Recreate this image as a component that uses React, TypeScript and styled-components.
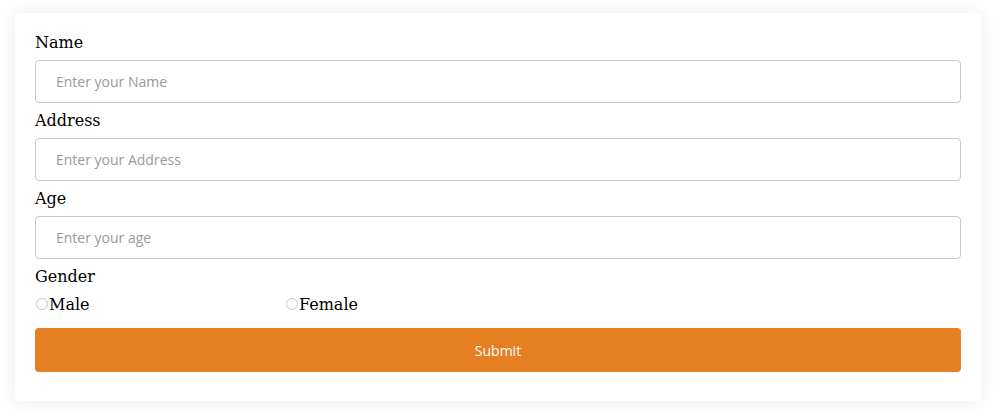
import styled, { createGlobalStyle } from 'styled-components';

const GlobalStyle = createGlobalStyle`
  html, body {
    margin: 0;
    padding: 0;
    background: #fff;
  }
  body {
    font-family: "DejaVu Serif", serif;
  }
`;

const Page = styled.div`
  padding: 13px 23px 18px 15px;
`;

const Card = styled.form`
  background: #fff;
  border-radius: 4px;
  box-shadow: 0 0 18px rgba(0, 0, 0, 0.08);
  padding: 20px 20px 29px;
  display: flex;
  flex-direction: column;
  gap: 8px;
`;

const Label = styled.label`
  display: block;
  font-family: "DejaVu Serif", serif;
  font-size: 16px;
  line-height: 19px;
  color: #000;
`;

const Input = styled.input`
  display: block;
  width: 100%;
  height: 43px;
  box-sizing: border-box;
  padding: 0 20px;
  border: 1px solid #c8c8c8;
  border-radius: 4px;
  font-family: "Open Sans", "Noto Sans", sans-serif;
  font-size: 14px;
  color: #333;
  outline: none;

  &::placeholder {
    color: #9a9a9a;
  }
`;

const RadioRow = styled.div`
  display: flex;
  height: 19px;
  align-items: center;
  margin-top: 1px;
  margin-bottom: 6px;
`;

const RadioOption = styled.label`
  width: 250px;
  display: flex;
  align-items: center;
  font-family: "DejaVu Serif", serif;
  font-size: 16px;
  line-height: 19px;
  color: #000;

  input {
    appearance: none;
    width: 12px;
    height: 12px;
    margin: 0 1px 0 1px;
    border: 1px solid #c4c4c4;
    border-radius: 50%;
    box-sizing: border-box;
    background: #fff;
    position: relative;
    top: -1px;
  }

  input:checked {
    border: 3px solid #e67e22;
  }
`;

const SubmitButton = styled.button`
  width: 100%;
  height: 44px;
  border: none;
  border-radius: 4px;
  background: #e67e22;
  color: #fff;
  font-family: "Open Sans", "Noto Sans", sans-serif;
  font-size: 14px;
  cursor: pointer;
`;

export default function App() {
  return (
    <>
      <GlobalStyle />
      <Page>
        <Card onSubmit={(e) => e.preventDefault()}>
          <Label htmlFor="name">Name</Label>
          <Input id="name" placeholder="Enter your Name" />
          <Label htmlFor="address">Address</Label>
          <Input id="address" placeholder="Enter your Address" />
          <Label htmlFor="age">Age</Label>
          <Input id="age" placeholder="Enter your age" />
          <Label>Gender</Label>
          <RadioRow>
            <RadioOption>
              <input type="radio" name="gender" value="male" />
              Male
            </RadioOption>
            <RadioOption>
              <input type="radio" name="gender" value="female" />
              Female
            </RadioOption>
          </RadioRow>
          <SubmitButton type="submit">Submit</SubmitButton>
        </Card>
      </Page>
    </>
  );
}
